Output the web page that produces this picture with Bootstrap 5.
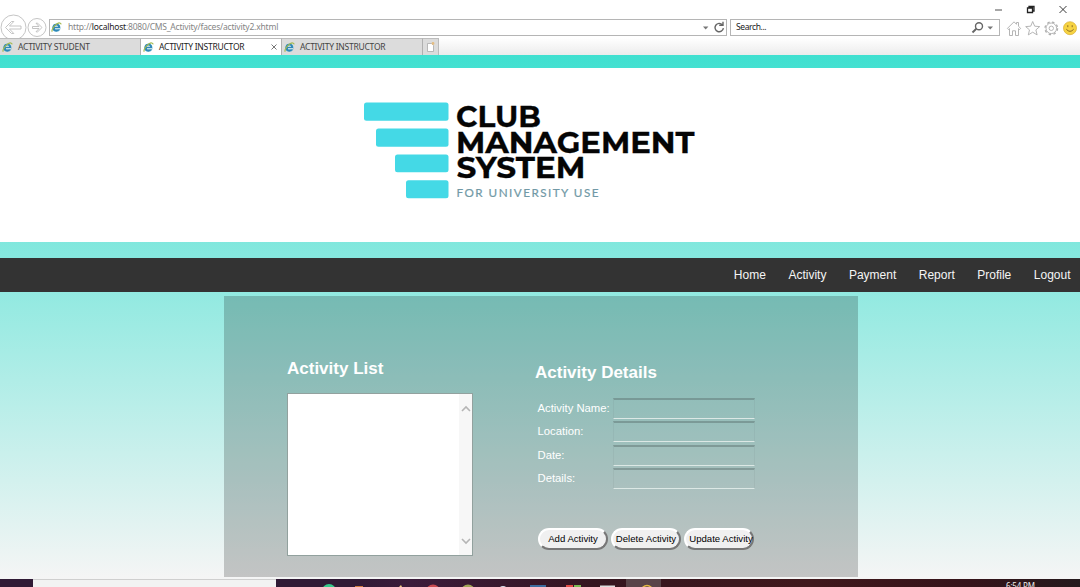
<!DOCTYPE html>
<html lang="en">
<head>
<meta charset="utf-8">
<title>ACTIVITY INSTRUCTOR</title>
<link href="https://cdn.jsdelivr.net/npm/bootstrap@5.3.0/dist/css/bootstrap.min.css" rel="stylesheet">
<style>
body{width:1080px;height:587px;overflow:hidden;background:#fff;font-family:"Liberation Sans",Arial,sans-serif;line-height:1}
svg{display:block;flex:none}
.chrome{height:55px;font-family:"Noto Sans","Open Sans",sans-serif;color:#444}
.titlebar{height:19px;padding-right:11px}
.toolbar{height:19px}
.navbtns{width:49px}
.navbtns svg{margin-top:-6px}
.field{height:17px;border:1px solid #b5b5b5;background:#fff;font-size:8.5px}
.address{width:678px;color:#858585;letter-spacing:-.2px;padding-left:1px}
.address .url{margin-left:6px}
.address b{font-weight:400;color:#222}
.searchbox{width:270px;margin-left:3px;padding-left:5px;color:#222;letter-spacing:-.4px}
.tabstrip{height:17px;background:linear-gradient(#fff,#ececec)}
.tabitem{width:141px;height:17px;background:#dcdcdc;border-top:1px solid #bcbcbc;border-right:1px solid #b0b0b0;font-size:8.5px;letter-spacing:-.25px;padding-left:2px;padding-right:4px}
.tabitem.current{background:#fff;color:#222}
.tabitem span{margin-left:5px;white-space:nowrap}
.newtab{width:16px;height:17px;background:#dcdcdc;border-top:1px solid #bcbcbc;border-right:1px solid #bbb}
.page{height:524px;padding-top:13px;background:linear-gradient(#40e0d0,#f5f5f5)}
.banner{height:174px;background:#fff;padding-left:350px;padding-top:22px}
.mainnav{height:33.5px;margin-top:16px;background:#333;padding-right:9.5px;gap:22.5px}
.mainnav .nav-link{color:#f5f5f5;font-size:12px;padding:1px 0 0;line-height:33px}
.panel{width:634px;height:281px;margin:4.500px 0 0 224px;background:rgba(0,0,0,.2);padding:63px 0 0 63px;color:#fff}
.panel h2{font-size:17px;line-height:20px;font-weight:700;margin:0;white-space:nowrap}
.listcol{width:248px}
.listbox{width:186px;height:163px;border:1px solid #92a19e;background:#fff;margin-top:14px}
.scroller{width:13px;background:#f7f7f7;padding:11px 0 10px}
.details{padding-top:4px}
.details h2{margin-bottom:15px}
.line{height:23.4px;padding-left:2.500px;font-size:11.3px}
.line label{width:75.5px;white-space:nowrap;line-height:20px}
.entry{width:142px;height:21px;background:transparent;border:solid;border-width:2px 1px 1px;border-color:rgba(90,110,108,.45) rgba(110,130,128,.12) #dce8e5;padding:0;outline:0}
.actions{padding-left:3px;margin-top:36px;gap:3px}
.pill{width:70px;height:22px;border:2px solid;border-color:#fff #777 #777 #fff;border-radius:11px;background:#f0f0f0;color:#000;font-size:9.600px;padding:0;line-height:18px;white-space:nowrap;text-align:center}
.pill.wide span{margin-right:-3px;margin-left:1px}
.taskbar{height:8px;background:linear-gradient(90deg,#301a35 0 33%,#3b1c3b 38%,#35151f 55%,#40181c 75%,#35131a 90%,#251a1d);overflow:hidden}
</style>
</head>
<body>
<svg width="0" height="0" class="position-absolute">
<defs>
<symbol id="ie" viewBox="0 0 11 11"><circle cx="5.400" cy="5.700" r="4" fill="#5aa9c9"/><path d="M9.100 6.300H3.500q.5 1.400 2 1.400 1 0 1.700-.6h1.600Q7.800 9.500 5.300 9.500 1.500 9.200 1.500 5.600 1.900 1.900 5.400 1.800 9.200 2 9.100 6.300Z" fill="#2d87b8"/><path d="M3.500 4.700h3.700Q6.800 3.400 5.300 3.400 3.900 3.400 3.500 4.700ZM4 6.300h5v.9H4z" fill="#e6f2f2"/><path d="M1.300 9.700C.2 8.300 2.500 4.300 5.700 2.100 8 .6 10 .5 9.900 2.400" fill="none" stroke="#a3b94d" stroke-width="1.200"/></symbol>
</defs>
</svg>
<header class="chrome">
  <div class="titlebar d-flex justify-content-end align-items-center">
    <svg width="75" height="19" viewBox="0 0 75 19" fill="none" stroke="#222"><path d="M1 10h7" stroke-width=".8"/><path d="M33.500 8h5v4.500h-5zM35 8V6.500h5V11h-1.500" stroke-width="1.300"/><path d="M65.500 6l7 7m0-7l-7 7" stroke-width=".9"/></svg>
  </div>
  <div class="toolbar d-flex align-items-start">
    <div class="navbtns"><svg width="49" height="27" viewBox="0 0 49 27" fill="none" stroke="#bdbdbd" stroke-width=".9"><circle cx="13.500" cy="14.500" r="12.500"/><circle cx="37" cy="14.500" r="9"/><path d="M5.500 14.500l6-6h2.300l-4.300 4.500H21v3H9.500l4.300 4.500h-2.300zM42 14.500l-4.300-4.300H36l3 3.300h-6.500v2H39l-3 3.300h1.700z"/></svg></div>
    <div class="field address d-flex align-items-center">
      <svg width="11" height="11"><use href="#ie"/></svg>
      <span class="url flex-grow-1">http://<b>localhost</b>:8080/CMS_Activity/faces/activity2.xhtml</span>
      <svg width="24" height="13" viewBox="0 0 24 13" class="me-0"><path d="M1 5.500h5.400L3.700 8.500z" fill="#777"/><path d="M20.300 3.700a4.200 4.200 0 1 0 1.100 3.500M17.200 4.200h3.800V.8" fill="none" stroke="#666" stroke-width="1.400"/></svg>
    </div>
    <div class="field searchbox d-flex align-items-center"><span class="flex-grow-1">Search...</span>
      <svg width="25" height="13" viewBox="0 0 25 13" class="me-1"><circle cx="9" cy="5.200" r="3.500" fill="none" stroke="#666" stroke-width="1.400"/><path d="M6.300 7.800L2.500 11.500" stroke="#666" stroke-width="1.900"/><path d="M17.500 5.500H23L20.200 8.500z" fill="#777"/></svg>
    </div>
    <svg width="74" height="18" viewBox="0 0 74 18" class="ms-1" fill="none" stroke="#adadad" stroke-width=".9"><path d="M3.500 9.300L10 2.800l2.500 2.500V3.500h2v3.800l2.200 2.100-1.200 1.200-1-1v6.900h-3v-4.700h-3v4.700h-3V9.600l-1 1z"/><path d="M28.700 2.500l2 4.700 5 .4-3.800 3.300 1.200 5-4.400-2.700-4.400 2.700 1.200-5-3.800-3.300 5-.4z"/><circle cx="47.300" cy="9.300" r="5.300"/><circle cx="47.300" cy="9.300" r="2.200"/><circle cx="47.300" cy="9.300" r="6.300" stroke-width="1.300" stroke-dasharray="2.450 2.500"/><circle cx="66" cy="9.200" r="6.500" fill="#f6d342" stroke="#d7ae35" stroke-width=".7"/><path d="M63.800 6.200v2M68.200 6.200v2M62.300 10.200q3.700 4.300 7.400 0" stroke="#8c6c25" stroke-width="1"/></svg>
  </div>
  <div class="tabstrip d-flex">
    <div class="tabitem d-flex align-items-center"><svg width="11" height="11"><use href="#ie"/></svg><span>ACTIVITY STUDENT</span></div>
    <div class="tabitem current d-flex align-items-center"><svg width="11" height="11"><use href="#ie"/></svg><span>ACTIVITY INSTRUCTOR</span><svg class="ms-auto" width="6" height="6" viewBox="0 0 6 6"><path d="M.5.5l5 5m0-5l-5 5" stroke="#777"/></svg></div>
    <div class="tabitem d-flex align-items-center"><svg width="11" height="11"><use href="#ie"/></svg><span>ACTIVITY INSTRUCTOR</span></div>
    <div class="newtab"><svg width="15" height="16" viewBox="0 0 15 16"><path d="M4.500 4.500h4l2 2v6h-6z" fill="#fff" stroke="#aaa" stroke-width=".8"/><circle cx="10" cy="4.500" r="1.400" fill="#e5bd82"/></svg></div>
  </div>
</header>
<main class="page">
  <div class="banner">
    <svg width="360" height="120" viewBox="0 0 360 120">
      <g fill="#44d9e6"><rect x="14" y="12.500" width="84.500" height="18.300" rx="2.500"/><rect x="26" y="38.500" width="72.500" height="18.300" rx="2.500"/><rect x="45" y="64.500" width="53.500" height="17.800" rx="2.500"/><rect x="56" y="90.300" width="42.500" height="18" rx="2.500"/></g>
      <g font-family="Montserrat,Inter,sans-serif" font-weight="700" font-size="29.500" fill="#050505" stroke="#050505" stroke-width=".3"><text x="106" y="37.200" textLength="85" lengthAdjust="spacingAndGlyphs">CLUB</text><text x="106" y="62.600" textLength="238.500" lengthAdjust="spacingAndGlyphs">MANAGEMENT</text><text x="106.500" y="87.800" textLength="129" lengthAdjust="spacingAndGlyphs">SYSTEM</text></g>
      <text x="106.500" y="107" font-family="Lato,sans-serif" font-weight="400" font-size="11.700" fill="#7199a6" stroke="#7199a6" stroke-width=".2" textLength="142">FOR UNIVERSITY USE</text>
    </svg>
  </div>
  <nav class="mainnav nav justify-content-end flex-nowrap">
    <a class="nav-link" href="#">Home</a><a class="nav-link" href="#">Activity</a><a class="nav-link" href="#">Payment</a><a class="nav-link" href="#">Report</a><a class="nav-link" href="#">Profile</a><a class="nav-link" href="#">Logout</a>
  </nav>
  <section class="panel d-flex">
    <div class="listcol">
      <h2>Activity List</h2>
      <div class="listbox d-flex justify-content-end"><div class="scroller d-flex flex-column justify-content-between align-items-center"><svg width="10" height="7" viewBox="0 0 10 7"><path d="M1 6l4-4 4 4" fill="none" stroke="#b5b5b5" stroke-width="1.600"/></svg><svg width="10" height="7" viewBox="0 0 10 7"><path d="M1 1l4 4 4-4" fill="none" stroke="#b5b5b5" stroke-width="1.600"/></svg></div></div>
    </div>
    <div class="details">
      <h2>Activity Details</h2>
      <div class="line d-flex"><label for="f1">Activity Name:</label><input id="f1" class="entry"></div>
      <div class="line d-flex"><label for="f2">Location:</label><input id="f2" class="entry"></div>
      <div class="line d-flex"><label for="f3">Date:</label><input id="f3" class="entry"></div>
      <div class="line d-flex"><label for="f4">Details:</label><input id="f4" class="entry"></div>
      <div class="actions d-flex"><button class="pill">Add Activity</button><button class="pill">Delete Activity</button><button class="pill wide"><span>Update Activity</span></button></div>
    </div>
  </section>
</main>
<footer class="taskbar">
  <svg width="1080" height="8" viewBox="0 0 1080 8"><rect x="33" width="243" height="8" fill="#f2f2f2"/><path d="M33 .3h243" stroke="#aaa" stroke-width=".6"/><circle cx="329" cy="12" r="7" fill="#36c98b"/><path d="M355 8v-1h8v1z" fill="#ce7b3e"/><path d="M399 8l2-2 1 2z" fill="#f0d080"/><circle cx="433" cy="12.500" r="7" fill="#c94a50"/><circle cx="468" cy="12.500" r="7" fill="#a2a657"/><circle cx="503" cy="11" r="4" fill="#d6e1eb"/><path d="M530 6h16v2h-16z" fill="#3c6d9f"/><path d="M566 6h7v2h-7z" fill="#e34d47"/><path d="M574 6h7v2h-7z" fill="#7cba52"/><path d="M600 6.500h15V8h-15z" fill="#ddd"/><rect x="626" width="35" height="8" fill="#594449"/><circle cx="647" cy="12" r="5.500" fill="none" stroke="#e5b944" stroke-width="1.500"/><text x="1006" y="10" font-size="8" font-family="Noto Sans,sans-serif" fill="#eee" textLength="29">6:54 PM</text></svg>
</footer>
<script src="https://cdn.jsdelivr.net/npm/bootstrap@5.3.0/dist/js/bootstrap.bundle.min.js"></script>
</body>
</html>
